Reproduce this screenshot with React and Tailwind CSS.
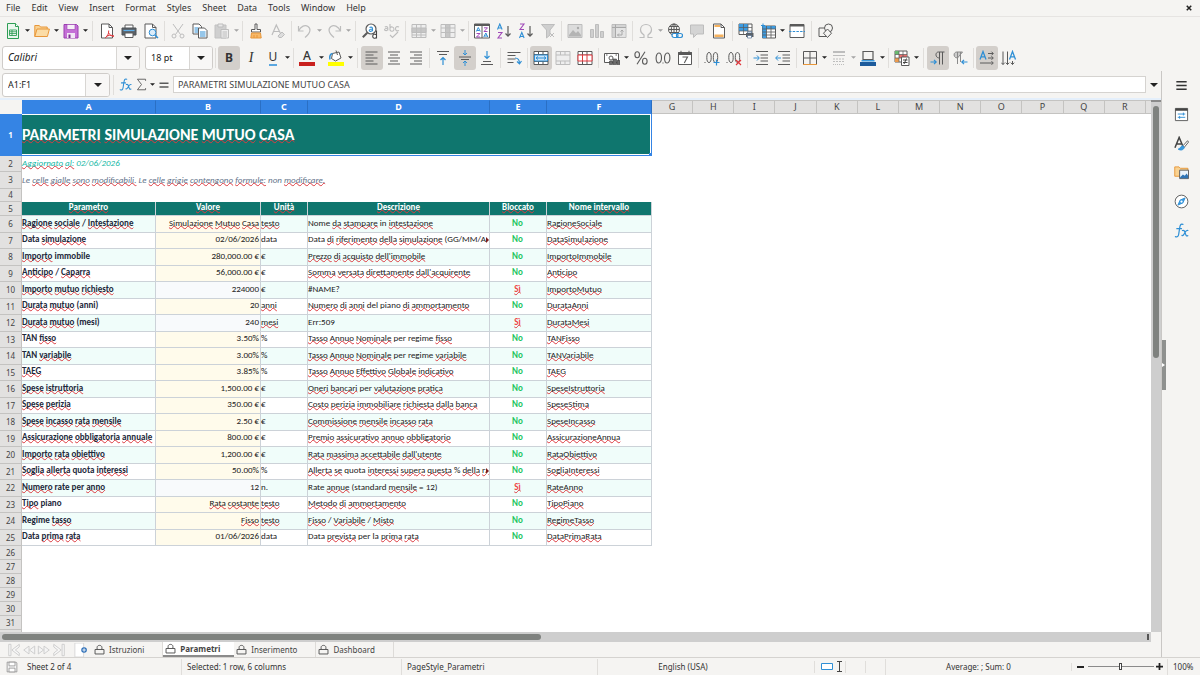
import { clsx } from 'clsx';

const G = '#5a5a5a';
const B = '#2f8fd5';
const L = '#bdbdbd';

const ICONS = {
  new: (<><path d="M2.500.5h8l3 3v12h-11z" fill="#eaf7ee" stroke="#2e9e55" /><path d="M10.500.5v3h3" fill="#fff" stroke="#2e9e55" /><path d="M4.500 7h7v5.500h-7zM4.500 8.800h7M4.500 10.600h7M7 7v5.500" fill="#fff" stroke="#2e9e55" strokeWidth=".9" /></>),
  open: (<><path d="M.8 13.500v-11h4.500l1.200 1.500h6.700v2" fill="#f9d292" stroke="#e8973a" /><path d="M.8 13.500 3 6h12.400l-2 7.500z" fill="#fbdca6" stroke="#e8973a" /></>),
  save: (<><path d="M1 1.500h12.500l1.500 1.500v12H1z" fill="#c46fd6" stroke="#9a3fb0" /><path d="M4 1.500h8v5H4z" fill="#f6f0f8" stroke="#9a3fb0" strokeWidth=".6" /><path d="M4 10h8v5H4z" fill="#f1e6f5" /><path d="M5.500 11.500h2v3.500h-2z" fill="#7d2f92" /></>),
  pdf: (<><path d="M2.500 1h7.500l3.500 3.500V15h-11z" fill="#fff" stroke={G} /><path d="M10 1v3.500h3.500" fill="none" stroke={G} /><path d="M6 15c2-1 4-4 3.700-7.500M9.700 10c1 2 3 3.500 5.300 3.300M7 13.500c2-1.200 5-1.700 8-.5" fill="none" stroke="#e0393e" /></>),
  print: (<><path d="M4 2h8v4H4z" fill="#fff" stroke={G} /><path d="M1 5h14v7H1z" fill="#5c6268" stroke="#4d5257" /><path d="M2.500 7.500h11" stroke="#5fb0ea" strokeWidth="1.200" /><path d="M4 10h8v4.500H4z" fill="#fff" stroke={G} /></>),
  preview: (<><path d="M2 1h7.500L13 4.500V15H2z" fill="#fff" stroke={G} /><path d="M9.500 1v3.500H13" fill="none" stroke={G} /><circle cx="9.500" cy="9.500" r="3.300" fill="#dcedfa" stroke={B} /><path d="m12 12 3 3" stroke={B} strokeWidth="1.500" /></>),
  cut: (<g fill="none" stroke={L}><path d="m3 1 7.500 10.500M13 1 5.500 11.500" /><circle cx="4" cy="13" r="2" /><circle cx="12" cy="13" r="2" /></g>),
  copy: (<><path d="M1 1h6l2.500 2.500V11H1z" fill="#fff" stroke={G} /><path d="M2.500 5h4M2.500 7h4M2.500 9h4" stroke={B} /><path d="M6.500 5h6L15 7.500V15H6.500z" fill="#fff" stroke={G} /><path d="M8 9h5.500M8 11h5.500M8 13h5.500" stroke={B} /></>),
  paste: (<><path d="M1 2h11v13H1z" fill="#cfcfcf" stroke="#c2c2c2" /><path d="M4 1h5v3H4z" fill="#e8e8e8" stroke={L} /><path d="M7 6.500h7.500V15H7z" fill="#ededed" stroke={L} /><path d="M8.500 9H13M8.500 11H13M8.500 13H13" stroke={L} /></>),
  brush: (<><path d="M7 1h2v5.500h3.500V9h-9V6.500H7z" fill="#fff" stroke={G} /><path d="M3.500 10h9l.7 5H2.800z" fill="#f7b868" stroke="#e8973a" /><path d="M6 12v3M9 12v3" stroke="#e8973a" /></>),
  clear: (<><path d="m2 12 4.300-10 4.200 8.500M3.600 8.500h5.800" fill="none" stroke={L} strokeWidth="1.200" /><path d="m8 13 4-4 2.500 2.500-3 3H9z" fill="#ddd" stroke={L} /></>),
  undo: <path d="M1.500 3v5h5M1.500 8C4 3 8 1.500 11 3.500s3 6-3 11" fill="none" stroke={L} strokeWidth="1.200" />,
  redo: <path d="M14.500 3v5h-5M14.500 8C12 3 8 1.500 5 3.500s-3 6 3 11" fill="none" stroke={L} strokeWidth="1.200" />,
  find: (<><circle cx="9" cy="6" r="5" fill="#fff" stroke={G} strokeWidth="1.200" /><path d="m5.300 9.800-4.500 4.500" stroke={G} strokeWidth="2" /><path d="M7.500 4.500c2-1 3 0 3 1.300V8.300M10.500 6c-4-.2-4 2.600-1.700 2.400 1 0 1.700-.8 1.700-1.600" fill="none" stroke={B} strokeWidth="1.100" /><path d="M14.500 7.500v8M14.500 12c-1-1.300-3.800-1-3.800 1.300s2.800 2.600 3.800 1" fill="#fff" stroke="#444" strokeWidth="1.100" /></>),
  spell: (<g fill="none" stroke={L} strokeWidth="1.100"><path d="M.8 4c2-1 3 0 3 1.300V7.500M3.800 5.300c-4-.2-4 2.500-1.500 2.300 1 0 1.500-.8 1.500-1.600M6 1v6.600M6 5c1-1.800 4-1.200 4 1.200S7 9 6 7M15 4c-2-1-3.500 0-3.500 1.800S13 8.400 15 7.500" /><path d="m6 12 2.500 2.500 5.500-5.500" /></g>),
  rows: (<g stroke={L}><path d="M1 1.500h14v13H1z" fill="#eee" /><path d="M1 5h14v4.500H1z" fill="#c6c6c6" /><path d="M1 12h14M5.500 1.500v13M10 1.500v13" fill="none" /></g>),
  cols: (<g stroke={L}><path d="M1 1.500h14v13H1z" fill="#eee" /><path d="M5.500 1.500H10v13H5.500z" fill="#c6c6c6" /><path d="M1 5h14M1 9.500h14" fill="none" /></g>),
  autofilter: (<><path d="M.5 1h15v14H.5zM8 1v14" fill="#fff" stroke={G} /><path d="M.5 1h15v2H.5z" fill={G} /><path d="m2.300 8.500 2-4 2 4M3 7.500h2.600M9.800 14l2-4 2 4M10.500 13h2.600" fill="none" stroke={B} /><path d="M2.500 10.500H6L2.500 14H6M10 4.800h3.500L10 8.500h3.500" fill="none" stroke="#a04ab8" /></>),
  asc: (<g fill="none"><path d="m1.500 6.500 2.300-5.500 2.300 5.500M2.300 5h3" stroke={B} strokeWidth="1.100" /><path d="M2 9.500h4l-4 5.500h4" stroke="#a04ab8" strokeWidth="1.100" /><path d="M12 3v10M9.500 10.500 12 13.200l2.500-2.700" stroke={G} strokeWidth="1.200" /></g>),
  desc: (<g fill="none"><path d="M2 1h4L2 6.500h4" stroke="#a04ab8" strokeWidth="1.100" /><path d="m1.500 15 2.300-5.500L6.100 15M2.300 13.500h3" stroke={B} strokeWidth="1.100" /><path d="M12 3v10M9.500 10.500 12 13.200l2.500-2.700" stroke={G} strokeWidth="1.200" /></g>),
  filter: (<><path d="M1.500 1.500h13L10 7v5l-3.500 3V7z" fill="#cfcfcf" stroke={L} /><path d="m10 10 4 4M14 10l-4 4" stroke={L} /></>),
  image: (<><path d="M1 1.500h14v13H1z" fill="#dcdcdc" stroke={L} /><path d="m2 12 4-5 3 3 2-2 3 4v1.500H2z" fill="#b4b4b4" /><circle cx="11" cy="5" r="1.200" fill="#aaa" /></>),
  chart: <path d="M1.500 6.500h3v8h-3zM6.500 1.500h3v13h-3zM11.500 8.500h3v6h-3z" fill="#cfcfcf" stroke={L} />,
  pivot: (<><path d="M1 1.500h14v13H1z" fill="#d4d4d4" stroke={L} /><path d="M5 5h9.500v9H5z" fill="#e4e4e4" /><path d="M1 4.500h14M4.500 1.500v13M6.500 12h4.500V7M9.500 8.500 11 7l1.500 1.500M8 10.500 6.500 12 8 13.500" fill="none" stroke="#a8a8a8" /></>),
  omega: <path d="M1.500 14.500H6V12C3.500 10.500 2.500 8.700 2.500 6.800 2.500 3.500 5 1.500 8 1.500s5.500 2 5.500 5.300c0 1.900-1 3.700-3.500 5.200v2.500h4.500" fill="none" stroke={L} strokeWidth="1.200" />,
  link: (<><g fill="none" stroke={G}><circle cx="7" cy="6.500" r="5.500" /><path d="M1.500 6.500h11M7 1v11M2.500 3.500h9M2.500 9.500h9" /><ellipse cx="7" cy="6.500" rx="2.700" ry="5.500" /></g><rect x="5" y="10.500" width="6" height="4" rx="2" fill="#fff" stroke={B} strokeWidth="1.200" /><rect x="9.500" y="10.500" width="6" height="4" rx="2" fill="none" stroke={B} strokeWidth="1.200" /></>),
  comment: <path d="M1.500 2h13v9H8l-3.500 3.500V11h-3z" fill="#d4d4d4" stroke={L} />,
  header: (<><path d="M2.500 1H10l3.500 3.500V15h-11z" fill="#fff" stroke={G} /><path d="M3.500 2H9v2H3.500zM3.500 11.500h9V14h-9z" fill="#f5b25f" /><path d="M10 1v3.500h3.500" fill="none" stroke={G} /></>),
  printarea: (<><path d="M1 1h13v10.500H1z" fill="#fff" stroke={G} /><path d="M1 1h9v7H1z" fill="#3d9be0" /><path d="M1 4.500h13M1 8h13M5.500 1v10.500M10 1v10.500" fill="none" stroke={G} strokeWidth=".7" /><path d="M8 10h7.500v4H8z" fill="#5c6268" /><path d="M9.500 8.500h4V10h-4zM9.500 12.500h4V15h-4z" fill="#fff" stroke="#3d5f88" strokeWidth=".6" /></>),
  freeze: (<><path d="M2.500 3h13v12h-13z" fill="#fff" stroke={G} /><path d="M2.500 3h4v12h-4zM2.500 3h13v3h-13z" fill="#3d9be0" /><path d="M2.500 6h13M2.500 9h13M2.500 12h13M6.500 3v12M11 3v12" fill="none" stroke={G} strokeWidth=".8" /><path d="M3 .5v4M1 2.500h4" stroke={B} /></>),
  split: (<><path d="M1 1.500h14v13H1z" fill="#fff" stroke={G} /><path d="M1 1.500h14v2H1z" fill={G} /><path d="M0 8.500h16" stroke={B} strokeDasharray="2.500 1.200" /></>),
  shapes: (<g fill="#f5f4f2" stroke={G}><path d="M1 5h7.500v8.500H1z" /><circle cx="10.500" cy="5" r="4" /><path d="m9.500 6 4 4.200-4 4.300-4-4.300z" /></g>),
  fill: (<><path d="M4.500 3.500 11 2l2 6-5.500 3-4-2.500z" fill="#fff" stroke={G} /><path d="M8 .5 9.500 5" stroke={G} /><path d="M4.500 3.500C2 4 1.500 7 2 9.500" fill="none" stroke={B} strokeWidth="1.500" /><path d="M0 12h16v4H0z" fill="#ffff00" /></>),
  alignL: <path d="M1.500 2h12M1.500 5h8M1.500 8h12M1.500 11h8M1.500 14h12" stroke={G} />,
  alignC: <path d="M2 2h12M4 5h8M2 8h12M4 11h8M2 14h12" stroke={G} />,
  alignR: <path d="M2 2h12M6 5h8M2 8h12M6 11h8M2 14h12" stroke={G} />,
  top: (<><path d="M2 1.500h12M4 4.500h8" stroke={G} /><path d="M8 15V7.500M5.500 10 8 7.500l2.500 2.500" fill="none" stroke={B} strokeWidth="1.200" /></>),
  middle: (<><path d="M2 7h12M4 9.500h8" stroke={G} /><path d="M8 0v5M6 3l2 2 2-2M8 16v-5M6 13l2-2 2 2" fill="none" stroke={B} /></>),
  bottom: (<><path d="M2 14.500h12M4 11.500h8" stroke={G} /><path d="M8 1v7.500M5.500 6 8 8.500 10.500 6" fill="none" stroke={B} strokeWidth="1.200" /></>),
  wrap: (<><path d="M1.500 2.500h13M1.500 5.500h8M1.500 9h8M1.500 12.500h6" stroke={G} /><path d="M9 8c3.500 0 4.500 2 4.500 5.500M11 11.500l2.500 2.300L15.500 11" fill="none" stroke={B} strokeWidth="1.200" /></>),
  merge: (<><path d="M1 1.500h14v13H1z" fill="#fff" stroke={G} /><path d="M1 4.500h14M1 11.500h14M5.500 1.500v3M10 1.500v3M5.500 11.500v3M10 11.500v3" stroke={G} /><path d="M1.500 5h13v6h-13z" fill="#cfe6f8" stroke={B} /><path d="M3 8h10M5 6.500 3 8l2 1.500M11 6.500 13 8l-2 1.500" fill="none" stroke={B} /></>),
  mergeC: (<><path d="M1 1.500h14v13H1z" fill="#eee" stroke={L} /><path d="M1 5h14M1 11h14M5.500 1.500V5M10 1.500V5M5.500 11v3.500M10 11v3.500" stroke={L} /></>),
  unmerge: (<><path d="M1 1.500h14v13H1zM1 5h14M5.500 1.500V5M10 1.500V5M5.500 11v3.500M10 11v3.500" fill="#fff" stroke={G} /><path d="M1 5h14v6H1zM5.500 5v6M10 5v6" fill="#fff" stroke="#e0393e" /></>),
  currency: (<><path d="M.5 3.500h14v9H.5z" fill="#fff" stroke={G} /><circle cx="7" cy="8" r="2" fill="none" stroke={G} /><path d="M2 5h1.500M11.500 5H13" stroke={G} /><path d="M5.500 11h3v3.500h-3zM9 9h3.500v5.500H9zM13 10.500h3v4h-3z" fill="#6d6d6d" stroke="#444" strokeWidth=".6" /></>),
  percent: (<g fill="none" stroke={G} strokeWidth="1.100"><ellipse cx="4.200" cy="4.700" rx="2.300" ry="3" /><ellipse cx="11.800" cy="11.300" rx="2.300" ry="3" /><path d="m12 1.700-8 12.600" /></g>),
  number: (<g fill="none" stroke={G} strokeWidth="1.100"><ellipse cx="3.800" cy="8" rx="2.700" ry="5" /><ellipse cx="12.200" cy="8" rx="2.700" ry="5" /><path d="M7.500 13h1" /></g>),
  date: (<><path d="M1.500 2.500h13v12h-13z" fill="#fff" stroke={G} /><path d="M1.500 2.500h13v2h-13zM4 .8v3M12 .8v3" fill={G} stroke={G} /><path d="M5.500 7h5L7.300 13" fill="none" stroke={G} strokeWidth="1.100" /></>),
  addDec: (<g fill="none"><path d="M.5 12.500h1" stroke={G} /><ellipse cx="5" cy="7.500" rx="2.200" ry="5" stroke={G} /><ellipse cx="11.500" cy="7.500" rx="2.200" ry="5" stroke={G} /><path d="M12.500 9.500v6M9.500 12.500h6" stroke={B} strokeWidth="1.200" /></g>),
  delDec: (<g fill="none"><path d="M.5 12.500h1" stroke={G} /><ellipse cx="5" cy="7.500" rx="2.200" ry="5" stroke={G} /><ellipse cx="11.500" cy="7.500" rx="2.200" ry="5" stroke={G} /><path d="m10 10 5 5M15 10l-5 5" stroke="#e0393e" strokeWidth="1.200" /></g>),
  incInd: (<><path d="M3 1.500h12M7.500 5H15M7.500 8H15M7.500 11H15M3 14.500h12" stroke={G} /><path d="M.5 8h5.500M4 5.500 6.300 8 4 10.500" fill="none" stroke={B} /></>),
  decInd: (<><path d="M3 1.500h12M7.500 5H15M7.500 8H15M7.500 11H15M3 14.500h12" stroke={G} /><path d="M6 8H.8M3 5.500.7 8 3 10.500" fill="none" stroke={B} /></>),
  borders: (<><path d="M1.500 14.500v-13h13v13M8 1.500v13M1.500 8h13" fill="none" stroke={G} /><path d="M1 14.500h14" stroke="#e8973a" /></>),
  lineStyle: (<><path d="M2 2h12" stroke={L} strokeWidth="2" /><path d="M2 5.500h12" stroke={L} /><path d="M2 9h12M2 11.500h12" stroke={L} strokeDasharray="2 1" /><path d="M2 14.500h12" stroke={L} strokeDasharray="1 1" /></>),
  lineColor: (<><path d="M3 1.500h10v8H3z" fill="#f5f4f2" stroke={G} strokeWidth="1.200" /><path d="M1.500 10h13v1.500h-13z" fill="#3d9be0" /><path d="M0 12h16v4H0z" fill="#1d5b9c" /></>),
  conditional: (<><path d="M1 1h12v11H1z" fill="#fff" stroke={G} /><path d="M1 1h4v3.500H1z" fill="#68b96f" /><path d="M5 4.500h8V8H5z" fill="#e76f6f" /><path d="M1 8h4v4H1z" fill="#ec9b4e" /><path d="M1 4.500h12M1 8h12M5 1v11M9 1v11" stroke={G} strokeWidth=".7" /><path d="M7.500 7H15v8.500H7.500z" fill="#fff" stroke={G} /><path d="M9 10h4.500M9 12.500h4.500M12.500 8.500l-2.500 5.500" stroke="#444" /></>),
  ltr: (<><path d="M9.500 2v12.500M12.500 2v12.500M14.500 2H8.500C5 2 5 8 9.500 8" fill="none" stroke={G} /><path d="M.5 12h5.500M4 9.800 6.200 12 4 14.200" fill="none" stroke={B} strokeWidth="1.200" /></>),
  rtl: (<><path d="M5.500 2v12M8.500 2v10M10.500 2H5C1 2 1 8 5.500 8z" fill="#ccc" stroke="#8a8a8a" /><path d="M15.500 12H10M12 9.800 9.800 12l2.200 2.200" fill="none" stroke={B} strokeWidth="1.200" /></>),
  horiz: (<><path d="m1 9.500 3-8 3 8M2 6.800h4" fill="none" stroke={B} strokeWidth="1.300" /><path d="M9 3.500h5M12.500 1.700l1.800 1.800-1.800 1.800M9 8h5M12.500 6.200 14.300 8l-1.800 1.800M1 13h13M12.500 11.200l1.800 1.800-1.800 1.800" fill="none" stroke={G} /></>),
  vert: (<><path d="m8.500 9.500 3-8 3 8M9.500 6.800h4" fill="none" stroke={B} strokeWidth="1.300" /><path d="M2 1.500v13M.3 12.700 2 14.500l1.700-1.800M6.500 1.500v13M4.800 12.700l1.700 1.800 1.700-1.800M11.500 11v3.500M9.800 12.700l1.700 1.800 1.700-1.800" fill="none" stroke={G} /></>),
  fx: (<g fill="none" stroke={B} strokeWidth="1.300" strokeLinecap="round"><path d="M9.500 1.500C7 .5 6.500 2.500 6 5.500L5 12c-.4 2.500-1.500 3.200-3.500 2.500M3 6h5" /><path d="M9 8c2-.8 2.300 1 3 3s1.200 3.500 2.700 2.500M14.800 8c-2-.5-3 2-3.500 3S9.500 14 8.500 13.300" /></g>),
  sigma: <path d="M13 3.500v-2H3L8 8l-5 6.500h10v-2" fill="none" stroke={G} strokeWidth="1.100" />,
  equals: <path d="M2 5.500h12M2 10.500h12" stroke={G} strokeWidth="2" />,
  menu: <path d="M2.500 4h11M2.500 8h11M2.500 12h11" stroke="#333" strokeWidth="1.500" />,
  props: (<><path d="M1.500 1.500h13v13h-13z" fill="#fff" stroke={G} /><path d="M1.500 1.500h13v2.500h-13z" fill="#444" /><path d="M4 7.500h8M10 6v3M4 11h8M6 9.500v3" stroke={B} /></>),
  styles: (<><path d="M1 12.500 5.500 1.500 9.500 11M2.800 8.500h5" fill="none" stroke="#444" strokeWidth="1.600" /><path d="m14.500 5-5 5.500 1.500 1.500 4.500-5.500z" fill="#fff" stroke={G} /><path d="M9.500 10.500C7 10.500 7 13.500 4.500 14c2.500 1.700 6 1 6.500-2z" fill="#3d9be0" stroke={B} /></>),
  gallery: (<><path d="M.8 12V2h4.500l1.500 1.500h8V12z" fill="#f9d292" stroke="#e8973a" /><path d="M6 5.500h9.500v9H6z" fill="#eaf4fc" stroke={G} /><path d="m6.500 13 3-3 2 1.500 2-2.500 1.500 2.500v2.500H6.500z" fill="#2f74b5" /></>),
  navigator: (<><circle cx="8" cy="8" r="6.800" fill="#fff" stroke={G} /><path d="m11.800 4.200-2.300 5.300-5.300 2.300 2.300-5.300z" fill="#3d9be0" stroke={B} /><circle cx="8" cy="8" r="1.200" fill="#fff" /></>),
  lock: <path d="M1.500 8h13v6.500h-13zM4.500 8V5c0-4 7-4 7 0v3" fill="none" stroke="#555" strokeWidth="1.400" />,
  disk: (<><path d="M1.500 1.500h12l1 1v12h-13z" fill="#f4f4f4" stroke="#8a8a8a" /><path d="M4 1.500h8v5H4zM4 9.500h8v5H4z" fill="#fff" stroke="#8a8a8a" /></>),
  first: <path d="M2 1.500v13h2.500v-13zM14 1.500 5.500 8l8.500 6.500v-3L9.500 8 14 4.500z" fill="#f8f8f8" stroke="#c9c9c9" />,
  prev: <path d="M8 3.500 2 8l6 4.500zM14.500 3.500l-6 4.500 6 4.500z" fill="#f4f4f4" stroke="#c9c9c9" />,
  next: <path d="m8 3.500 6 4.500-6 4.500zM1.500 3.500l6 4.500-6 4.500z" fill="#f4f4f4" stroke="#c9c9c9" />,
  last: <path d="M14 1.500v13h-2.500v-13zM2 1.500 10.500 8 2 14.500v-3L6.500 8 2 4.500z" fill="#f8f8f8" stroke="#c9c9c9" />,
  addSheet: (<><path d="M1 0h10v16H1z" fill="#fff" stroke="#d6d6d6" /><circle cx="11.500" cy="8" r="3.200" fill="#2d6fb8" /><path d="M11.500 6v4M9.500 8h4" stroke="#fff" /></>),
};

function Icon({ name, className = 'size-4' }) {
  return (
    <svg viewBox="0 0 16 16" className={clsx('shrink-0', className)} fill="none" aria-hidden="true">
      {ICONS[name]}
    </svg>
  );
}

function Caret({ muted, big }) {
  return (
    <svg viewBox="0 0 8 4" className={clsx('shrink-0', big ? 'w-2 h-1' : 'w-[5px] h-[3px]')} aria-hidden="true">
      <path d="M0 0h8L4 4z" fill={muted ? '#a5a5a5' : '#222'} />
    </svg>
  );
}

function Tool({ label, icon, active, children }) {
  return (
    <button
      type="button"
      aria-label={label}
      className={clsx('w-[22px] h-6 shrink-0 rounded-[3px] flex items-center justify-center', active && 'bg-[#d3cfcb]')}
    >
      {icon ? <Icon name={icon} /> : children}
    </button>
  );
}

function Arrow({ label, muted }) {
  return (
    <button type="button" aria-label={label} className="w-[7px] h-6 shrink-0 flex items-center justify-center">
      <Caret muted={muted} />
    </button>
  );
}

function Sep({ wide }) {
  return (
    <div className={clsx('h-5 shrink-0 flex justify-center', wide ? 'w-[7px]' : 'w-[5px]')}>
      <div className="w-px h-full bg-[#e0dedb]" />
    </div>
  );
}

// '|' separator, '||' wide separator, 'v' arrow, '-v' disabled arrow
const STANDARD = [
  'new', 'v', 'open', 'v', 'save', 'v', '||', 'pdf', 'print', 'preview', '|', 'cut', 'copy', 'paste', '-v', '|',
  'brush', 'clear', '|', 'undo', '-v', 'redo', '-v', '||', 'find', 'spell', '|', 'rows', '-v', 'cols', '-v', '|',
  'autofilter', 'asc', 'desc', 'filter', '|', 'image', 'chart', 'pivot', '|', 'omega', '-v', 'link', 'comment',
  'header', '|', 'printarea', 'freeze', 'v', 'split', '||', 'shapes',
];

const FORMATTING = [
  '||', 'alignL', 'alignC', 'alignR', '|', 'top', 'middle', 'bottom', '|', 'wrap', '|', 'merge', 'mergeC', 'unmerge',
  '|', 'currency', 'v', 'percent', 'number', 'date', '|', 'addDec', 'delDec', '|', 'incInd', 'decInd', '|', 'borders',
  'v', 'lineStyle', '-v', 'lineColor', 'v', '|', 'conditional', 'v', '||', 'ltr', 'rtl', '|', 'horiz', 'vert',
];

const ACTIVE = ['alignL', 'middle', 'merge', 'ltr', 'horiz'];

function renderTools(list) {
  return list.map((item, i) => {
    if (item === '|' || item === '||') return <Sep key={i} wide={item === '||'} />;
    if (item === 'v' || item === '-v') return <Arrow key={i} muted={item === '-v'} label={`${list[i - 1]} options`} />;
    return <Tool key={i} label={item} icon={item} active={ACTIVE.includes(item)} />;
  });
}

function Combo({ label, value, italic, className, arrowClass }) {
  return (
    <div className={clsx('h-6 shrink-0 flex border border-[#cfccc9] rounded-[3px] bg-white overflow-hidden', className)}>
      <input
        aria-label={label}
        defaultValue={value}
        className={clsx('flex-1 min-w-0 pl-[5px] text-[#222] outline-none', italic ? 'text-[10px] italic' : 'text-[9px]')}
      />
      <button
        type="button"
        aria-label={`${label} list`}
        className={clsx('border-l border-[#d8d6d3] bg-[#f8f7f6] flex items-center justify-center', arrowClass)}
      >
        <Caret big />
      </button>
    </div>
  );
}

const MENU = ['File', 'Edit', 'View', 'Insert', 'Format', 'Styles', 'Sheet', 'Data', 'Tools', 'Window', 'Help'];

function MenuBar() {
  return (
    <nav className="h-[17px] shrink-0 flex items-center border-b border-[#e6e4e2] pl-px text-[9px] leading-4 text-[#333]">
      {MENU.map((m) => (
        <button key={m} type="button" className="pl-[5px] pr-[6px]">{m}</button>
      ))}
      <button type="button" aria-label="Close" className="ml-auto mr-2 text-[#222]">
        <svg viewBox="0 0 8 8" className="size-[6px]"><path d="m1 1 6 6M7 1 1 7" stroke="currentColor" strokeWidth="2" /></svg>
      </button>
    </nav>
  );
}

function FormulaBar() {
  return (
    <div className="h-[27px] shrink-0 flex items-center pl-0.5">
      <Combo label="Name Box" value="A1:F1" className="w-[108px]" arrowClass="w-6" />
      <Sep wide />
      <button type="button" aria-label="Function Wizard" className="w-4 h-5 flex items-center justify-center"><Icon name="fx" className="size-[13px]" /></button>
      <button type="button" aria-label="Select Function" className="w-4 h-5 flex items-center justify-center"><Icon name="sigma" className="size-[13px]" /></button>
      <Arrow label="Function options" />
      <button type="button" aria-label="Formula" className="w-4 h-5 flex items-center justify-center"><Icon name="equals" className="size-3" /></button>
      <input
        aria-label="Input line"
        defaultValue="PARAMETRI SIMULAZIONE MUTUO CASA"
        className="flex-1 min-w-0 h-[17px] ml-px border border-[#d5d3d0] bg-white px-1 text-[9px] text-[#444] outline-none"
      />
      <button type="button" aria-label="Expand Formula Bar" className="w-[15px] h-5 flex items-center justify-center"><Caret big /></button>
    </div>
  );
}

const KNOWN = [
  'data', 'immobile', 'tan', 'nome', 'in', 'per', 'regime', 'piano', 'del', 'quota', 'rate', 'la', 'non', 'le',
  '(anni)', '(mesi)', '(gg/mm/aa', '(standard', '#name?', 'err:509', 'no', 'n.',
];

function Spell({ text }) {
  return text.split(' ').map((word, i) => {
    const ok = KNOWN.includes(word.toLowerCase()) || !/[a-z]/i.test(word);
    return (
      <span key={i}>
        {i > 0 && ' '}
        <span className={ok ? undefined : 'underline decoration-wavy decoration-1 decoration-[#dc3a40] -underline-offset-1 [text-decoration-skip-ink:none]'}>
          {word}
        </span>
      </span>
    );
  });
}

const HEADERS = ['Parametro', 'Valore', 'Unità', 'Descrizione', 'Bloccato', 'Nome intervallo'];

const ROWS = [
  ['Ragione sociale / Intestazione', 'Simulazione Mutuo Casa', 'testo', 'Nome da stampare in intestazione', 'No', 'RagioneSociale'],
  ['Data simulazione', '02/06/2026', 'data', 'Data di riferimento della simulazione (GG/MM/AA', 'No', 'DataSimulazione'],
  ['Importo immobile', '280,000.00 €', '€', "Prezzo di acquisto dell'immobile", 'No', 'ImportoImmobile'],
  ['Anticipo / Caparra', '56,000.00 €', '€', "Somma versata direttamente dall'acquirente", 'No', 'Anticipo'],
  ['Importo mutuo richiesto', '224000', '€', '#NAME?', 'Sì', 'ImportoMutuo'],
  ['Durata mutuo (anni)', '20', 'anni', 'Numero di anni del piano di ammortamento', 'No', 'DurataAnni'],
  ['Durata mutuo (mesi)', '240', 'mesi', 'Err:509', 'Sì', 'DurataMesi'],
  ['TAN fisso', '3.50%', '%', 'Tasso Annuo Nominale per regime fisso', 'No', 'TANFisso'],
  ['TAN variabile', '3.00%', '%', 'Tasso Annuo Nominale per regime variabile', 'No', 'TANVariabile'],
  ['TAEG', '3.85%', '%', 'Tasso Annuo Effettivo Globale indicativo', 'No', 'TAEG'],
  ['Spese istruttoria', '1,500.00 €', '€', 'Oneri bancari per valutazione pratica', 'No', 'SpeseIstruttoria'],
  ['Spese perizia', '350.00 €', '€', 'Costo perizia immobiliare richiesta dalla banca', 'No', 'SpeseStima'],
  ['Spese incasso rata mensile', '2.50 €', '€', 'Commissione mensile incasso rata', 'No', 'SpeseIncasso'],
  ['Assicurazione obbligatoria annuale', '800.00 €', '€', 'Premio assicurativo annuo obbligatorio', 'No', 'AssicurazioneAnnua'],
  ['Importo rata obiettivo', '1,200.00 €', '€', "Rata massima accettabile dall'utente", 'No', 'RataObiettivo'],
  ['Soglia allerta quota interessi', '50.00%', '%', 'Allerta se quota interessi supera questa % della rat', 'No', 'SogliaInteressi'],
  ['Numero rate per anno', '12', 'n.', 'Rate annue (standard mensile = 12)', 'Sì', 'RateAnno'],
  ['Tipo piano', 'Rata costante', 'testo', 'Metodo di ammortamento', 'No', 'TipoPiano'],
  ['Regime tasso', 'Fisso', 'testo', 'Fisso / Variabile / Misto', 'No', 'RegimeTasso'],
  ['Data prima rata', '01/06/2026', 'data', 'Data prevista per la prima rata', 'No', 'DataPrimaRata'],
];

const OVERFLOWING = [7, 21];

const CELL = 'p-0 pr-px pb-[3px] border-r border-b border-[#ccd2d8] overflow-hidden whitespace-nowrap leading-3 align-middle';

function RowHead({ n, selected }) {
  return (
    <th
      scope="row"
      className={clsx(
        "p-0 border-r border-b font-['Noto_Sans',sans-serif] text-[8px] leading-3 text-center align-middle",
        selected ? 'bg-[#3584e4] border-[#3584e4] text-white font-bold' : 'bg-[#e2e1e0] border-[#c4c3c1] text-[#444] font-normal',
      )}
    >
      {n}
    </th>
  );
}

function DataRow({ row, n }) {
  const locked = row[4] === 'Sì';
  const stripe = n % 2 === 0 ? 'bg-[#f0fdfa]' : 'bg-white';
  return (
    <tr className={n % 2 === 0 ? 'h-[17px]' : 'h-4'}>
      <RowHead n={n} />
      <td className={clsx(CELL, stripe, 'font-bold text-[#1e293b]')}><Spell text={row[0]} /></td>
      <td className={clsx(CELL, 'text-right', locked ? 'bg-[#f8fafc]' : 'bg-[#fffbeb]')}><Spell text={row[1]} /></td>
      <td className={clsx(CELL, stripe)}><Spell text={row[2]} /></td>
      <td className={clsx(CELL, stripe, 'relative')}>
        <Spell text={row[3]} />
        {OVERFLOWING.includes(n) && (
          <svg viewBox="0 0 3 6" className={clsx('absolute right-0 top-1 w-[3px] h-1.5', stripe)} aria-hidden="true">
            <path d="M0 0v6l3-3z" fill="#7f1d1d" />
          </svg>
        )}
      </td>
      <td className={clsx(CELL, stripe, 'text-center font-bold', locked ? 'text-[#ef4444]' : 'text-[#22c55e]')}><Spell text={row[4]} /></td>
      <td className={clsx(CELL, stripe)}><Spell text={row[5]} /></td>
      <td colSpan={13} className="p-0" />
    </tr>
  );
}

const COLS = 'ABCDEFGHIJKLMNOPQR'.split('');

function Sheet() {
  return (
    <div className="flex-1 min-w-0 overflow-hidden bg-white">
      <table className="w-full table-fixed border-separate border-spacing-0 font-['Carlito','Lato',sans-serif] text-[9px] text-[#222]">
        <colgroup>
          <col className="w-[22px]" />
          <col className="w-[134px]" />
          <col className="w-[105px]" />
          <col className="w-[47px]" />
          <col className="w-[182px]" />
          <col className="w-[57px]" />
          <col className="w-[105px]" />
          {COLS.slice(6).map((c) => <col key={c} />)}
          <col className="w-[5px]" />
        </colgroup>
        <thead>
          <tr className="h-[14px] font-['Noto_Sans',sans-serif] text-[9px]">
            <td className="p-0 bg-[#f5f4f2]" />
            {COLS.map((c, i) => (
              <th
                key={c}
                scope="col"
                className={clsx(
                  'p-0 border-r border-t border-b leading-3 text-center',
                  i < 6 ? 'bg-[#3584e4] border-t-[#3584e4] border-b-[#3584e4] border-r-[#2a6fc4] text-white font-bold' : 'bg-[#e2e1e0] border-[#c4c3c1] text-[#444] font-normal',
                )}
              >
                {c}
              </th>
            ))}
            <td className="p-0 bg-[#e2e1e0] border-y border-[#c4c3c1]" />
          </tr>
        </thead>
        <tbody>
          <tr className="h-[42px]">
            <RowHead n={1} selected />
            <td colSpan={6} className="relative p-0 bg-[#0f766e] border-b border-r border-[#3584e4] text-[16px] leading-5 font-bold text-white whitespace-nowrap">
              <div className="h-[41px] flex items-center border-y border-r border-white">
                <span><Spell text="PARAMETRI SIMULAZIONE MUTUO CASA" /></span>
              </div>
              <div className="absolute -right-px -bottom-px size-[3px] bg-[#3584e4]" />
            </td>
            <td colSpan={13} className="p-0" />
          </tr>
          <tr className="h-4">
            <RowHead n={2} />
            <td colSpan={19} className="p-0 pb-0.5 leading-3 italic text-[#14b8a6]"><Spell text="Aggiornato al: 02/06/2026" /></td>
          </tr>
          <tr className="h-[17px]">
            <RowHead n={3} />
            <td colSpan={19} className="p-0 pb-0.5 leading-3 italic text-[#64748b]">
              <Spell text="Le celle gialle sono modificabili. Le celle grigie contengono formule: non modificare." />
            </td>
          </tr>
          <tr className="h-3">
            <RowHead n={4} />
            <td colSpan={19} className="p-0" />
          </tr>
          <tr className="h-[14px]">
            <RowHead n={5} />
            {HEADERS.map((h) => (
              <td key={h} className="p-0 pb-[3px] bg-[#0f766e] border-r border-b border-[#ccd2d8] leading-[10px] text-center font-bold text-white whitespace-nowrap"><Spell text={h} /></td>
            ))}
            <td colSpan={13} className="p-0" />
          </tr>
          {ROWS.map((row, i) => <DataRow key={row[5]} row={row} n={i + 6} />)}
          {[26, 27, 28, 29, 30, 31, null].map((n) => (
            <tr key={n ?? 'rest'} className="h-[14px]">
              <RowHead n={n} />
              <td colSpan={19} className="p-0" />
            </tr>
          ))}
        </tbody>
      </table>
    </div>
  );
}

function SheetTabs() {
  return (
    <div className="h-[15px] shrink-0 flex items-center pl-1.5 text-[8px] leading-[13px] text-[#444]">
      {['first', 'prev', 'next', 'last'].map((n) => (
        <button key={n} type="button" aria-label={`${n} sheet`} className="w-[15px] h-[15px] flex items-center justify-center">
          <Icon name={n} className="size-[14px]" />
        </button>
      ))}
      <button type="button" aria-label="Add sheet" className="ml-2 w-4 h-[15px] flex items-center"><Icon name="addSheet" className="size-[14px]" /></button>
      {['Istruzioni', 'Parametri', 'Inserimento', 'Dashboard'].map((t) => (
        <button
          key={t}
          type="button"
          className={clsx(
            'h-[15px] flex items-center gap-1 pl-0.5',
            t === 'Parametri' ? 'pr-[14px] bg-white font-bold border-b-2 border-[#8b8b8b]' : 'pr-[18px] border-r border-[#dddbd8]',
            t === 'Istruzioni' && 'ml-0.5',
          )}
        >
          <Icon name="lock" className="size-[11px]" />
          {t}
        </button>
      ))}
    </div>
  );
}

function Sidebar() {
  return (
    <aside className="w-[39px] shrink-0 flex flex-col items-center border-l border-[#c9c7c5]">
      {['menu', 'props', 'styles', 'gallery', 'navigator', 'fx'].map((n) => (
        <button key={n} type="button" aria-label={n} className="size-[29px] flex items-center justify-center">
          <Icon name={n} className="size-[15px]" />
        </button>
      ))}
    </aside>
  );
}

function StatusBar() {
  return (
    <footer className="h-[17px] shrink-0 flex items-center text-[8px] leading-4 text-[#333] whitespace-nowrap">
      <div className="w-[23px] pl-1.5"><Icon name="disk" className="size-3" /></div>
      <div className="w-[158px] pl-1">Sheet 2 of 4</div>
      <div className="w-[220px] pl-[5px] border-l border-[#e0dedb]">Selected: 1 row, 6 columns</div>
      <div className="w-[196px] pl-[5px] border-l border-[#e0dedb]">PageStyle_Parametri</div>
      <div className="flex-1 border-l border-[#e0dedb] text-center">English (USA)</div>
      <div className="w-[46px] border-l border-[#e0dedb]" />
      <div className="w-[31px] h-3 border-l border-[#e0dedb] flex items-center gap-1 pl-1.5">
        <svg viewBox="0 0 12 7" className="w-3 h-[7px]"><path d="M.5.5h11v6H.5z" fill="#fff" stroke={B} /></svg>
        <svg viewBox="0 0 5 11" className="w-[5px] h-[11px]"><path d="M0 .5h5M0 10.500h5M2.500.5v10" stroke="#444" /></svg>
      </div>
      <div className="w-5 h-3 border-l border-[#e0dedb]" />
      <div className="w-5 h-3 border-l border-[#e0dedb]" />
      <div className="w-[186px] border-l border-[#e0dedb] text-center">Average: ; Sum: 0</div>
      <div className="w-24 border-l border-[#e0dedb] flex items-center justify-between pl-[5px] pr-1">
        <button type="button" aria-label="Zoom out" className="w-2 h-2 flex items-center"><span className="w-[7px] h-0.5 bg-[#222]" /></button>
        <input
          type="range"
          aria-label="Zoom"
          min="0"
          max="100"
          defaultValue="50"
          className="w-[66px] h-2 appearance-none bg-transparent [&::-webkit-slider-runnable-track]:h-px [&::-webkit-slider-runnable-track]:bg-[#8b8b8b] [&::-webkit-slider-thumb]:appearance-none [&::-webkit-slider-thumb]:w-[3px] [&::-webkit-slider-thumb]:h-[7px] [&::-webkit-slider-thumb]:-mt-[3px] [&::-webkit-slider-thumb]:border [&::-webkit-slider-thumb]:border-[#444] [&::-webkit-slider-thumb]:bg-white"
        />
        <button type="button" aria-label="Zoom in">
          <svg viewBox="0 0 8 8" className="size-[7px]"><path d="M4 0v8M0 4h8" stroke="#222" strokeWidth="2" /></svg>
        </button>
      </div>
      <div className="w-[33px] pl-[5px] border-l border-[#e0dedb]">100%</div>
    </footer>
  );
}

export default function App() {
  return (
    <div className="h-screen flex flex-col overflow-hidden bg-[#f5f4f2] font-['Noto_Sans',sans-serif]">
      <MenuBar />
      <div className="h-[27px] shrink-0 flex items-center pl-0.5">{renderTools(STANDARD)}</div>
      <div className="h-[27px] shrink-0 flex items-center pl-0.5">
        <Combo label="Font Name" value="Calibri" italic className="w-[138px]" arrowClass="w-[23px]" />
        <div className="w-[5px] shrink-0" />
        <Combo label="Font Size" value="18 pt" className="w-[68px]" arrowClass="w-[23px]" />
        <Sep />
        <Tool label="Bold" active><span className="text-[12px] font-bold text-[#333]">B</span></Tool>
        <Tool label="Italic"><span className="font-['Liberation_Serif',serif] text-[14px] italic text-[#333]">I</span></Tool>
        <Tool label="Underline"><span className="text-[12px] leading-[14px] text-[#333] border-b-2 border-[#5ba7e0]">U</span></Tool>
        <Arrow label="Underline options" />
        <Sep />
        <Tool label="Font Color">
          <span className="w-4 h-4 border-b-4 border-[#c9211e] text-[12px] leading-3 font-medium text-center text-[#333]">A</span>
        </Tool>
        <Arrow label="Font Color options" />
        <Tool label="Background Color" icon="fill" />
        <Arrow label="Background Color options" />
        {renderTools(FORMATTING)}
      </div>
      <div className="flex-1 min-h-0 flex border-b border-[#d5d3d0]">
        <main className="flex-1 min-w-0 flex flex-col">
          <FormulaBar />
          <div className="h-0.5 shrink-0 bg-[#e4effb]" />
          <div className="flex-1 min-h-0 flex">
            <Sheet />
            <div className="relative w-[10px] shrink-0 bg-[#cecece] border-t-2 border-[#8b8b8b]">
              <div className="mx-auto mt-1 w-1.5 h-[252px] rounded-full bg-[#7f827f]" />
              <div className="absolute right-[-5px] top-[238px] w-1 h-[50px] bg-[#8f918f] flex items-center">
                <svg viewBox="0 0 3 4" className="w-[3px] h-1"><path d="M0 0v4l3-2z" fill="#fff" /></svg>
              </div>
            </div>
          </div>
          <div className="h-[10px] shrink-0 mr-[10px] bg-[#cecece] flex items-center justify-between px-0.5">
            <div className="w-[47%] h-1.5 rounded-full bg-[#7f827f]" />
            <div className="w-0.5 h-1.5 bg-[#555]" />
          </div>
          <SheetTabs />
        </main>
        <Sidebar />
      </div>
      <StatusBar />
    </div>
  );
}
